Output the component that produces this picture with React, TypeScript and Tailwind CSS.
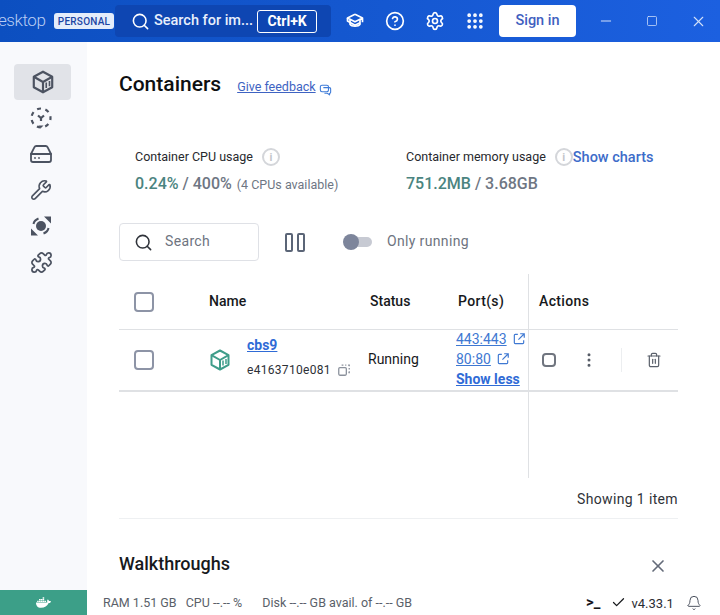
import React from "react";
import { Bell, Check, CircleHelp, EllipsisVertical, Grip, HardDrive, Minus, Puzzle, Search, Settings, Square, Trash2, Wrench, X } from "lucide-react";
import { FaDocker } from "react-icons/fa";

const ContainerIcon = ({ className }: { className?: string }) => (
  <svg viewBox="0 0 24 24" fill="none" stroke="currentColor" strokeWidth="2" strokeLinejoin="round" className={className}>
    <path d="M12 2.500 20.500 7.200v9.600L12 21.500 3.500 16.800V7.200Z" />
    <path d="M3.500 7.200 12 12l8.500-4.800M12 12v9.500" />
    <path d="M15 12.500v5M18 11v5" strokeWidth="1.500" />
  </svg>
);

const LearnIcon = () => (
  <svg viewBox="0 0 24 24" fill="none" stroke="currentColor" strokeWidth="2" strokeLinejoin="round" className="w-[20px] h-[20px]">
    <path d="M12 4 21 8.500v5M12 4 3 8.500 12 13l9-4.500" />
    <path d="M6 10.500v5.500c2 3 10 3 12 0v-5.500" />
    <path d="M3 8.500v3.500L12 17l6-3" />
  </svg>
);

const DashedCircleIcon = () => (
  <svg viewBox="0 0 24 24" fill="none" stroke="currentColor" strokeWidth="2.200" className="w-[24px] h-[24px]">
    <circle cx="12" cy="12" r="9.500" strokeDasharray="4 4.500" strokeDashoffset="2" />
    <path d="M9 9.500 12 12l3-2.500M12 12v3" />
    <path d="M9.500 19.500h5L12 22Z" fill="currentColor" stroke="none" />
  </svg>
);

const BuildsIcon = () => (
  <svg viewBox="0 0 24 24" fill="none" stroke="currentColor" strokeWidth="2" className="w-[24px] h-[24px]">
    <circle cx="12" cy="12" r="5" fill="currentColor" stroke="none" />
    <path d="M4.500 10c.4-2.500 2.500-4.500 5-5.500M19.500 14c-.4 2.500-2.500 4.500-5 5.500" />
    <path d="M15 2.500h7v7ZM9 21.500H2v-7Z" fill="currentColor" stroke="none" />
  </svg>
);

const OpenIcon = () => (
  <svg viewBox="0 0 24 24" fill="none" stroke="currentColor" strokeWidth="2" className="w-[14px] h-[14px]">
    <path d="M10 4H5.500A1.500 1.500 0 0 0 4 5.500v13A1.500 1.500 0 0 0 5.500 20h13a1.500 1.500 0 0 0 1.500-1.500V14" />
    <path d="M14 3h7v7M21 3l-10 10" />
  </svg>
);

const CopyIcon = () => (
  <svg viewBox="0 0 24 24" fill="none" stroke="currentColor" strokeWidth="2.200" className="w-[14px] h-[14px] text-[#8b919c]">
    <rect x="3" y="8" width="13" height="13" rx="2" />
    <path d="M9 4.500V3.500h2M14 3.500h2M19 3.500h2v2M21 8.500v2.500M21 14v2.500h-1.500" />
  </svg>
);

const FeedbackIcon = () => (
  <svg viewBox="0 0 24 24" fill="none" stroke="currentColor" strokeWidth="2" strokeLinejoin="round" className="w-[13px] h-[13px]">
    <rect x="2.500" y="4" width="15" height="12" rx="3" />
    <path d="M8 8.500h11a2.500 2.500 0 0 1 2.500 2.500v6a2 2 0 0 1-2 2v3l-4-3H10" />
  </svg>
);

const InfoIcon = () => (
  <span className="flex items-center justify-center w-[18px] h-[18px] rounded-full border-2 border-[#d4d6da] text-[#c3c6cb] text-[11px] leading-none font-bold">i</span>
);

const CheckBox = ({ size }: { size: string }) => (
  <span className={`block rounded-[4px] border-2 border-[#8d94a6] ${size}`} />
);

export default function App() {
  return (
    <div className="w-[720px] h-[615px] overflow-hidden flex flex-col bg-white text-[#17191c] font-['Roboto',sans-serif]">
      {/* Barra superior */}
      <header className="h-[42px] shrink-0 flex items-center bg-gradient-to-r from-[#0c4fc0] to-[#1c60e0] text-white">
        <span className="-ml-[2px] w-[56px] text-[17px] font-light tracking-tight text-[#b9cdf3] overflow-hidden">esktop</span>
        <span className="h-[16px] w-[60px] flex items-center justify-center rounded-[3px] bg-[#e4edfb] text-[#1b45a3] text-[10px] font-medium tracking-wide">PERSONAL</span>
        <div className="ml-[1px] w-[216px] h-[32px] rounded-[4px] bg-[#0e46b2] flex items-center pl-[16px]">
          <Search size={19} strokeWidth={2} />
          <span className="ml-[4px] text-[14.500px] font-medium text-[#e8effc]">Search for im...</span>
          <span className="ml-[4px] h-[23px] w-[60px] flex items-center justify-center rounded-[3px] border border-white text-[14px] font-bold">Ctrl+K</span>
        </div>
        <div className="ml-[14px] w-[20px] flex justify-center"><LearnIcon /></div>
        <CircleHelp size={20} strokeWidth={2} className="ml-[20px]" />
        <Settings size={20} strokeWidth={2} className="ml-[20px]" />
        <Grip size={20} strokeWidth={2.500} className="ml-[20px]" />
        <button className="ml-[14px] w-[77px] h-[32px] rounded-[4px] bg-white text-[#3f5fc0] text-[14.500px] font-medium">Sign in</button>
        <Minus size={16} strokeWidth={1.500} className="ml-[22px] text-[#d2e0f9]" />
        <Square size={12} strokeWidth={1.500} className="ml-[32px] text-[#d2e0f9]" />
        <X size={17} strokeWidth={1.500} className="ml-[32px] text-[#d2e0f9]" />
      </header>

      <div className="flex flex-1 min-h-0">
        {/* Barra lateral */}
        <nav className="w-[87px] shrink-0 bg-[#f8f9fc] pt-[22px] pl-[14px] text-[#4c5361] flex flex-col">
          <div className="w-[57px] h-[36px] rounded-[4px] bg-[#e1e3e8] flex items-center justify-center">
            <ContainerIcon className="w-[26px] h-[26px]" />
          </div>
          {[<DashedCircleIcon />, <HardDrive size={24} strokeWidth={1.800} />, <Wrench size={22} strokeWidth={1.800} />, <BuildsIcon />, <Puzzle size={23} strokeWidth={1.800} />].map((icon, i) => (
            <div key={i} className="w-[54px] h-[36px] flex items-center justify-center">{icon}</div>
          ))}
        </nav>

        {/* Contenido */}
        <main className="flex-1 min-w-0 pl-[32px] pr-[42px]">
          <div className="pt-[30px] flex items-baseline">
            <h1 className="text-[21px] font-medium leading-[25px] text-[#0e0f11]">Containers</h1>
            <a className="ml-[16px] text-[12.500px] text-[#3e63c2] underline">Give feedback</a>
            <span className="ml-[3px] self-end mb-[1px] text-[#3e7bd8]"><FeedbackIcon /></span>
          </div>

          <div className="mt-[50px] flex">
            <div className="pl-[16px] w-[287px]">
              <div className="flex items-center h-[20px]">
                <span className="text-[12.500px] text-[#27292d]">Container CPU usage</span>
                <span className="ml-[9px]"><InfoIcon /></span>
              </div>
              <div className="mt-[5px] flex items-baseline">
                <span className="text-[16px] font-medium text-[#4a8480]">0.24%</span>
                <span className="ml-[4px] text-[16px] font-medium text-[#6e7683]">/ 400%</span>
                <span className="ml-[5px] text-[12.500px] text-[#6e7683]">(4 CPUs available)</span>
              </div>
            </div>
            <div>
              <div className="flex items-center h-[20px]">
                <span className="text-[12.500px] text-[#27292d]">Container memory usage</span>
                <span className="ml-[9px]"><InfoIcon /></span>
                <a className="mt-[2px] text-[14.500px] font-medium text-[#3d6cc9]">Show charts</a>
              </div>
              <div className="mt-[5px] text-[16px] font-medium">
                <span className="text-[#4a8480]">751.2MB</span>
                <span className="text-[#6e7683]"> / 3.68GB</span>
              </div>
            </div>
          </div>

          <div className="mt-[27px] flex items-center">
            <div className="w-[140px] h-[38px] rounded-[4px] border border-[#dfe1e6] flex items-center pl-[14px]">
              <Search size={19} strokeWidth={2} className="text-[#30343b]" />
              <span className="ml-[12px] mb-[2px] text-[14px] tracking-wide text-[#6e7480]">Search</span>
            </div>
            <div className="ml-[26px] flex gap-[4px]">
              <span className="block w-[8px] h-[19px] rounded-[2px] border-2 border-[#5b6577]" />
              <span className="block w-[8px] h-[19px] rounded-[2px] border-2 border-[#5b6577]" />
            </div>
            <div className="ml-[39px] relative w-[28px] h-[10px] rounded-full bg-[#c7cad3]">
              <span className="absolute -left-[1px] -top-[3px] w-[16px] h-[16px] rounded-full bg-[#7d859b]" />
            </div>
            <span className="ml-[15px] mb-[2px] text-[14px] tracking-wide text-[#6e7480]">Only running</span>
          </div>

          {/* Tabla */}
          <div className="mt-[13px] h-[204px] grid grid-cols-[90px_159px_88px_72px_150px] grid-rows-[56px_62px_1fr] text-[14px]">
            <div className="border-b border-[#dfe1e4] flex items-center pl-[15px]"><CheckBox size="w-[20px] h-[20px]" /></div>
            <div className="border-b border-[#dfe1e4] flex items-center font-medium">Name</div>
            <div className="border-b border-[#dfe1e4] flex items-center font-medium pl-[2px]">Status</div>
            <div className="border-b border-[#dfe1e4] flex items-center font-medium pl-[2px] tracking-wide">Port(s)</div>
            <div className="border-b border-[#dfe1e4] border-l flex items-center font-medium pl-[10px] tracking-wide">Actions</div>

            <div className="border-b-2 border-[#dfe1e4] flex items-center pl-[15px]"><CheckBox size="w-[20px] h-[20px]" /></div>
            <div className="border-b-2 border-[#dfe1e4] flex items-center">
              <ContainerIcon className="-ml-[1px] w-[24px] h-[24px] text-[#3f9d8a]" />
              <div className="ml-[15px] mb-[6px]">
                <a className="block text-[14px] leading-[20px] font-bold text-[#2f6bd6] underline">cbs9</a>
                <div className="mt-[6px] flex items-center text-[12px] leading-[18px] tracking-wide text-[#2d3036]">
                  e4163710e081
                  <span className="ml-[6px]"><CopyIcon /></span>
                </div>
              </div>
            </div>
            <div className="border-b-2 border-[#dfe1e4] flex items-center pb-[2px]">Running</div>
            <div className="border-b-2 border-[#dfe1e4] flex flex-col justify-center pb-[2px] text-[14px] leading-[20px] text-[#3e78d2]">
              <div className="flex items-center"><a className="underline">443:443</a><span className="ml-[5px]"><OpenIcon /></span></div>
              <div className="flex items-center"><a className="underline">80:80</a><span className="ml-[5px]"><OpenIcon /></span></div>
              <a className="font-bold text-[#2f6bd6] underline">Show less</a>
            </div>
            <div className="border-b-2 border-l border-[#dfe1e4] flex items-center pl-[13px]">
              <CheckBox size="w-[14px] h-[14px] border-[#70757f]" />
              <EllipsisVertical size={18} strokeWidth={2} className="ml-[24px] text-[#565c67]" />
              <span className="ml-[23px] w-px h-[24px] bg-[#eceef0]" />
              <Trash2 size={16} strokeWidth={1.800} className="ml-[24px] text-[#5a606b]" />
            </div>

            <div className="col-span-4" />
            <div className="border-l border-[#dfe1e4]" />
          </div>

          <div className="mt-[11px] text-right text-[14px] tracking-wide text-[#2f3238]">Showing 1 item</div>
          <div className="mt-[8px] border-t border-[#eef0f2]" />
          <div className="mt-[31px] flex items-center justify-between">
            <h2 className="mb-[4px] text-[18px] font-medium text-[#17191c]">Walkthroughs</h2>
            <X size={20} strokeWidth={2} className="mr-[10px] text-[#646b79]" />
          </div>
        </main>
      </div>

      {/* Barra de estado */}
      <footer className="h-[25px] shrink-0 flex items-center bg-white text-[12.500px] text-[#5a5f69]">
        <div className="w-[87px] h-full bg-[#3c9f88] flex items-center justify-center text-white"><FaDocker size={15} /></div>
        <span className="ml-[16px] mt-[2px]">RAM 1.51 GB</span>
        <span className="ml-[9px] mt-[2px]">CPU --.-- %</span>
        <span className="ml-[20px] mt-[2px]">Disk --.-- GB avail. of --.-- GB</span>
        <span className="ml-[174px] text-[15px] font-bold leading-none text-[#15171a]">{">_"}</span>
        <Check size={15} strokeWidth={2} className="ml-[11px] text-[#17191c]" />
        <span className="ml-[5px] mt-[2px] text-[13px] text-[#2a2d33]">v4.33.1</span>
        <Bell size={16} strokeWidth={1.500} className="ml-[12px] text-[#4d5360]" />
      </footer>
    </div>
  );
}
